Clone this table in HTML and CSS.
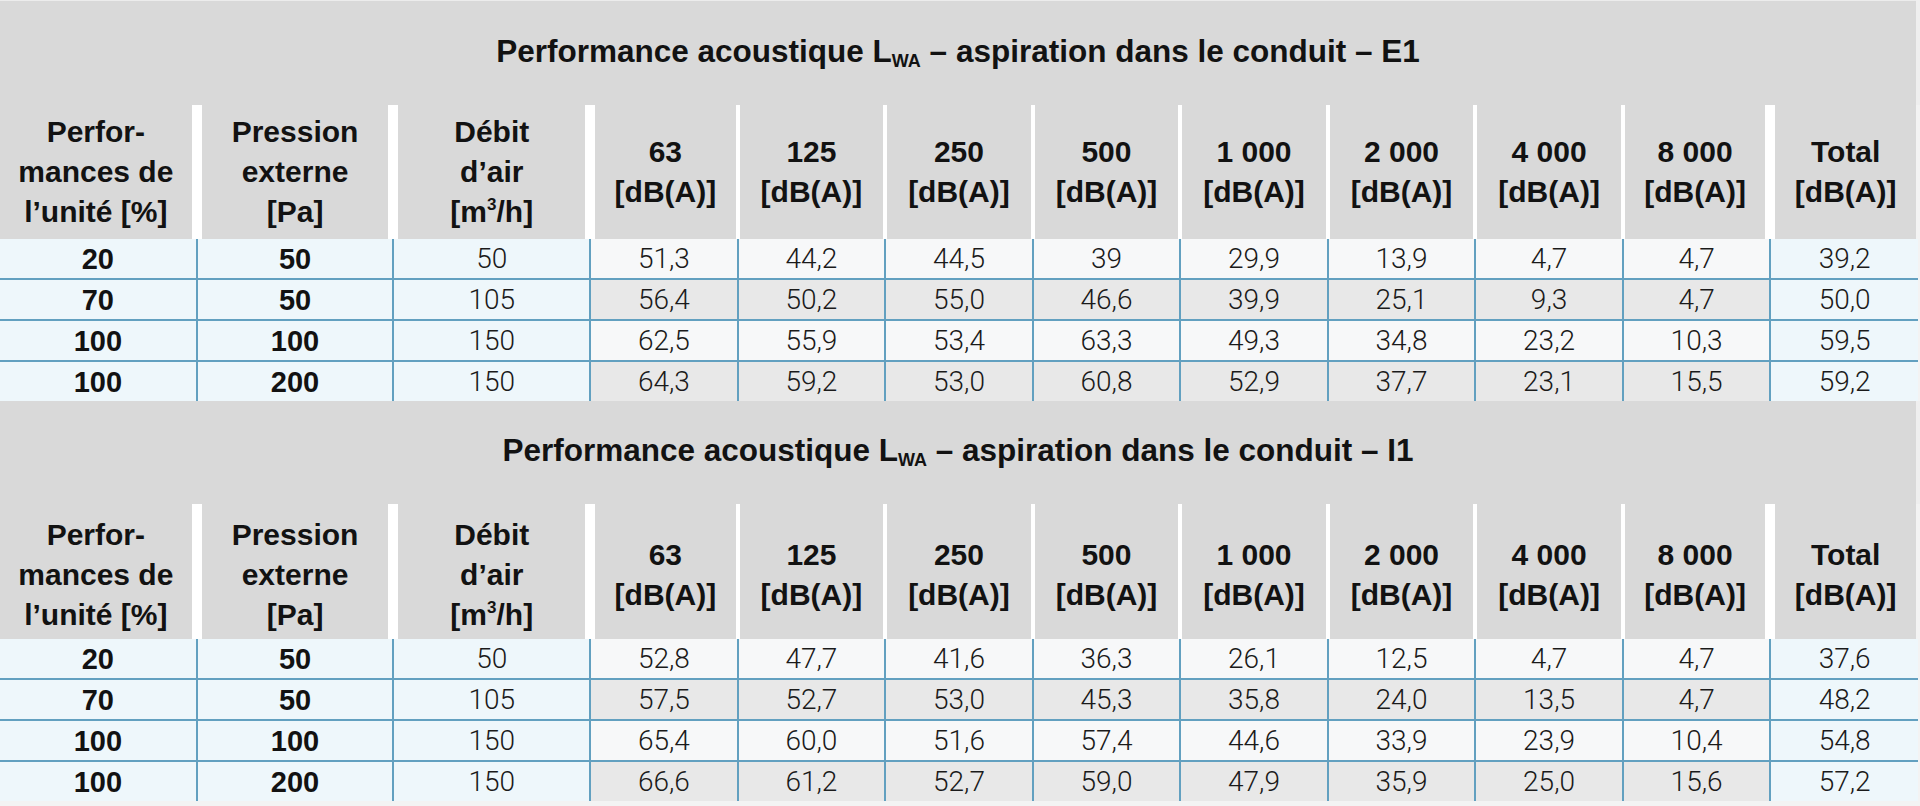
FILE: index.html
```html
<!DOCTYPE html>
<html lang="fr">
<head>
<meta charset="utf-8">
<title>Performance acoustique</title>
<link rel="stylesheet" href="styles.css">
</head>
<body>
<table class="perf first">
  <colgroup>
    <col class="c-wide"><col class="c-wide"><col class="c-wide">
    <col class="c-narrow"><col class="c-narrow"><col class="c-narrow"><col class="c-narrow"><col class="c-narrow"><col class="c-narrow"><col class="c-narrow"><col class="c-narrow"><col class="c-narrow">
  </colgroup>
  <thead>
    <tr class="title-row"><th colspan="12" class="title">Performance acoustique L<sub>WA</sub> – aspiration dans le conduit – E1</th></tr>
    <tr class="head-row">
      <th>Perfor-<br>mances de<br>l’unité [%]</th>
      <th class="thick">Pression<br>externe<br>[Pa]</th>
      <th class="thick">Débit<br>d’air<br>[m<sup>3</sup>/h]</th>
      <th class="thick">63<br>[dB(A)]</th>
      <th class="thin">125<br>[dB(A)]</th>
      <th class="thin">250<br>[dB(A)]</th>
      <th class="thin">500<br>[dB(A)]</th>
      <th class="thin">1 000<br>[dB(A)]</th>
      <th class="thin">2 000<br>[dB(A)]</th>
      <th class="thin">4 000<br>[dB(A)]</th>
      <th class="thin">8 000<br>[dB(A)]</th>
      <th class="thick last">Total<br>[dB(A)]</th>
    </tr>
  </thead>
  <tbody>
    <tr class="odd"><td class="key b">20</td><td class="key b">50</td><td class="key">50</td><td>51,3</td><td>44,2</td><td>44,5</td><td>39</td><td>29,9</td><td>13,9</td><td>4,7</td><td>4,7</td><td class="key">39,2</td></tr>
    <tr class="even"><td class="key b">70</td><td class="key b">50</td><td class="key">105</td><td>56,4</td><td>50,2</td><td>55,0</td><td>46,6</td><td>39,9</td><td>25,1</td><td>9,3</td><td>4,7</td><td class="key">50,0</td></tr>
    <tr class="odd"><td class="key b">100</td><td class="key b">100</td><td class="key">150</td><td>62,5</td><td>55,9</td><td>53,4</td><td>63,3</td><td>49,3</td><td>34,8</td><td>23,2</td><td>10,3</td><td class="key">59,5</td></tr>
    <tr class="even"><td class="key b">100</td><td class="key b">200</td><td class="key">150</td><td>64,3</td><td>59,2</td><td>53,0</td><td>60,8</td><td>52,9</td><td>37,7</td><td>23,1</td><td>15,5</td><td class="key">59,2</td></tr>
  </tbody>
</table>
<table class="perf second">
  <colgroup>
    <col class="c-wide"><col class="c-wide"><col class="c-wide">
    <col class="c-narrow"><col class="c-narrow"><col class="c-narrow"><col class="c-narrow"><col class="c-narrow"><col class="c-narrow"><col class="c-narrow"><col class="c-narrow"><col class="c-narrow">
  </colgroup>
  <thead>
    <tr class="title-row"><th colspan="12" class="title">Performance acoustique L<sub>WA</sub> – aspiration dans le conduit – I1</th></tr>
    <tr class="head-row">
      <th>Perfor-<br>mances de<br>l’unité [%]</th>
      <th class="thick">Pression<br>externe<br>[Pa]</th>
      <th class="thick">Débit<br>d’air<br>[m<sup>3</sup>/h]</th>
      <th class="thick">63<br>[dB(A)]</th>
      <th class="thin">125<br>[dB(A)]</th>
      <th class="thin">250<br>[dB(A)]</th>
      <th class="thin">500<br>[dB(A)]</th>
      <th class="thin">1 000<br>[dB(A)]</th>
      <th class="thin">2 000<br>[dB(A)]</th>
      <th class="thin">4 000<br>[dB(A)]</th>
      <th class="thin">8 000<br>[dB(A)]</th>
      <th class="thick last">Total<br>[dB(A)]</th>
    </tr>
  </thead>
  <tbody>
    <tr class="odd"><td class="key b">20</td><td class="key b">50</td><td class="key">50</td><td>52,8</td><td>47,7</td><td>41,6</td><td>36,3</td><td>26,1</td><td>12,5</td><td>4,7</td><td>4,7</td><td class="key">37,6</td></tr>
    <tr class="even"><td class="key b">70</td><td class="key b">50</td><td class="key">105</td><td>57,5</td><td>52,7</td><td>53,0</td><td>45,3</td><td>35,8</td><td>24,0</td><td>13,5</td><td>4,7</td><td class="key">48,2</td></tr>
    <tr class="odd"><td class="key b">100</td><td class="key b">100</td><td class="key">150</td><td>65,4</td><td>60,0</td><td>51,6</td><td>57,4</td><td>44,6</td><td>33,9</td><td>23,9</td><td>10,4</td><td class="key">54,8</td></tr>
    <tr class="even"><td class="key b">100</td><td class="key b">200</td><td class="key">150</td><td>66,6</td><td>61,2</td><td>52,7</td><td>59,0</td><td>47,9</td><td>35,9</td><td>25,0</td><td>15,6</td><td class="key">57,2</td></tr>
  </tbody>
</table>
</body>
</html>
```

FILE: styles.css
```css
html, body {
  margin: 0;
  padding: 0;
  background: #f3f3f3;
}

body {
  width: 1920px;
  height: 806px;
  overflow: hidden;
  font-family: "Liberation Sans", Arial, sans-serif;
  color: #121212;
}

.perf {
  width: 1920px;
  table-layout: fixed;
  border-collapse: collapse;
  border-spacing: 0;
}

.c-wide { width: 10.2564%; }
.c-narrow { width: 7.6923%; }

.perf th {
  padding: 0;
  background: #d9d9d9;
  font-weight: 700;
  font-size: 30px;
  line-height: 40px;
  text-align: center;
  vertical-align: middle;
}

.title-row .title {
  height: 100px;
  padding-bottom: 4px;
  font-size: 31.5px;
  border-right: 4px solid #efefef;
}

.first .title-row .title {
  border-top: 1px solid #ececec;
}

.second .title-row .title {
  height: 97px;
  padding-bottom: 6px;
}

.title sub {
  font-size: 18px;
  vertical-align: -5px;
  line-height: 0;
}

.head-row th {
  height: 134px;
}

.second .head-row th {
  height: 129px;
  padding-top: 6px;
}

.head-row th.thick {
  border-left: 10px solid #ffffff;
}

.head-row th.thin {
  border-left: 4px solid #ffffff;
}

.head-row th.last {
  border-right: 4px solid #f3f3f3;
}

.head-row sup {
  font-size: 17px;
  vertical-align: 12px;
  line-height: 0;
}

.perf td {
  height: 39px;
  padding: 0;
  text-align: center;
  vertical-align: middle;
  font-family: Roboto, "Liberation Sans", sans-serif;
  font-weight: 300;
  font-size: 28px;
  line-height: 32px;
  color: #1a1a1a;
  border-left: 2px solid #62a0c0;
}

.perf td:first-child {
  border-left: none;
}

.perf tbody tr + tr td {
  border-top: 2px solid #62a0c0;
}

.perf tr.odd td { background: #f7f8f9; }
.perf tr.even td { background: #e8e8e8; }

.perf tr td.key { background: #eef7fb; }

.perf td.b {
  font-family: "Liberation Sans", Arial, sans-serif;
  font-weight: 700;
  font-size: 29px;
  color: #121212;
}
```
